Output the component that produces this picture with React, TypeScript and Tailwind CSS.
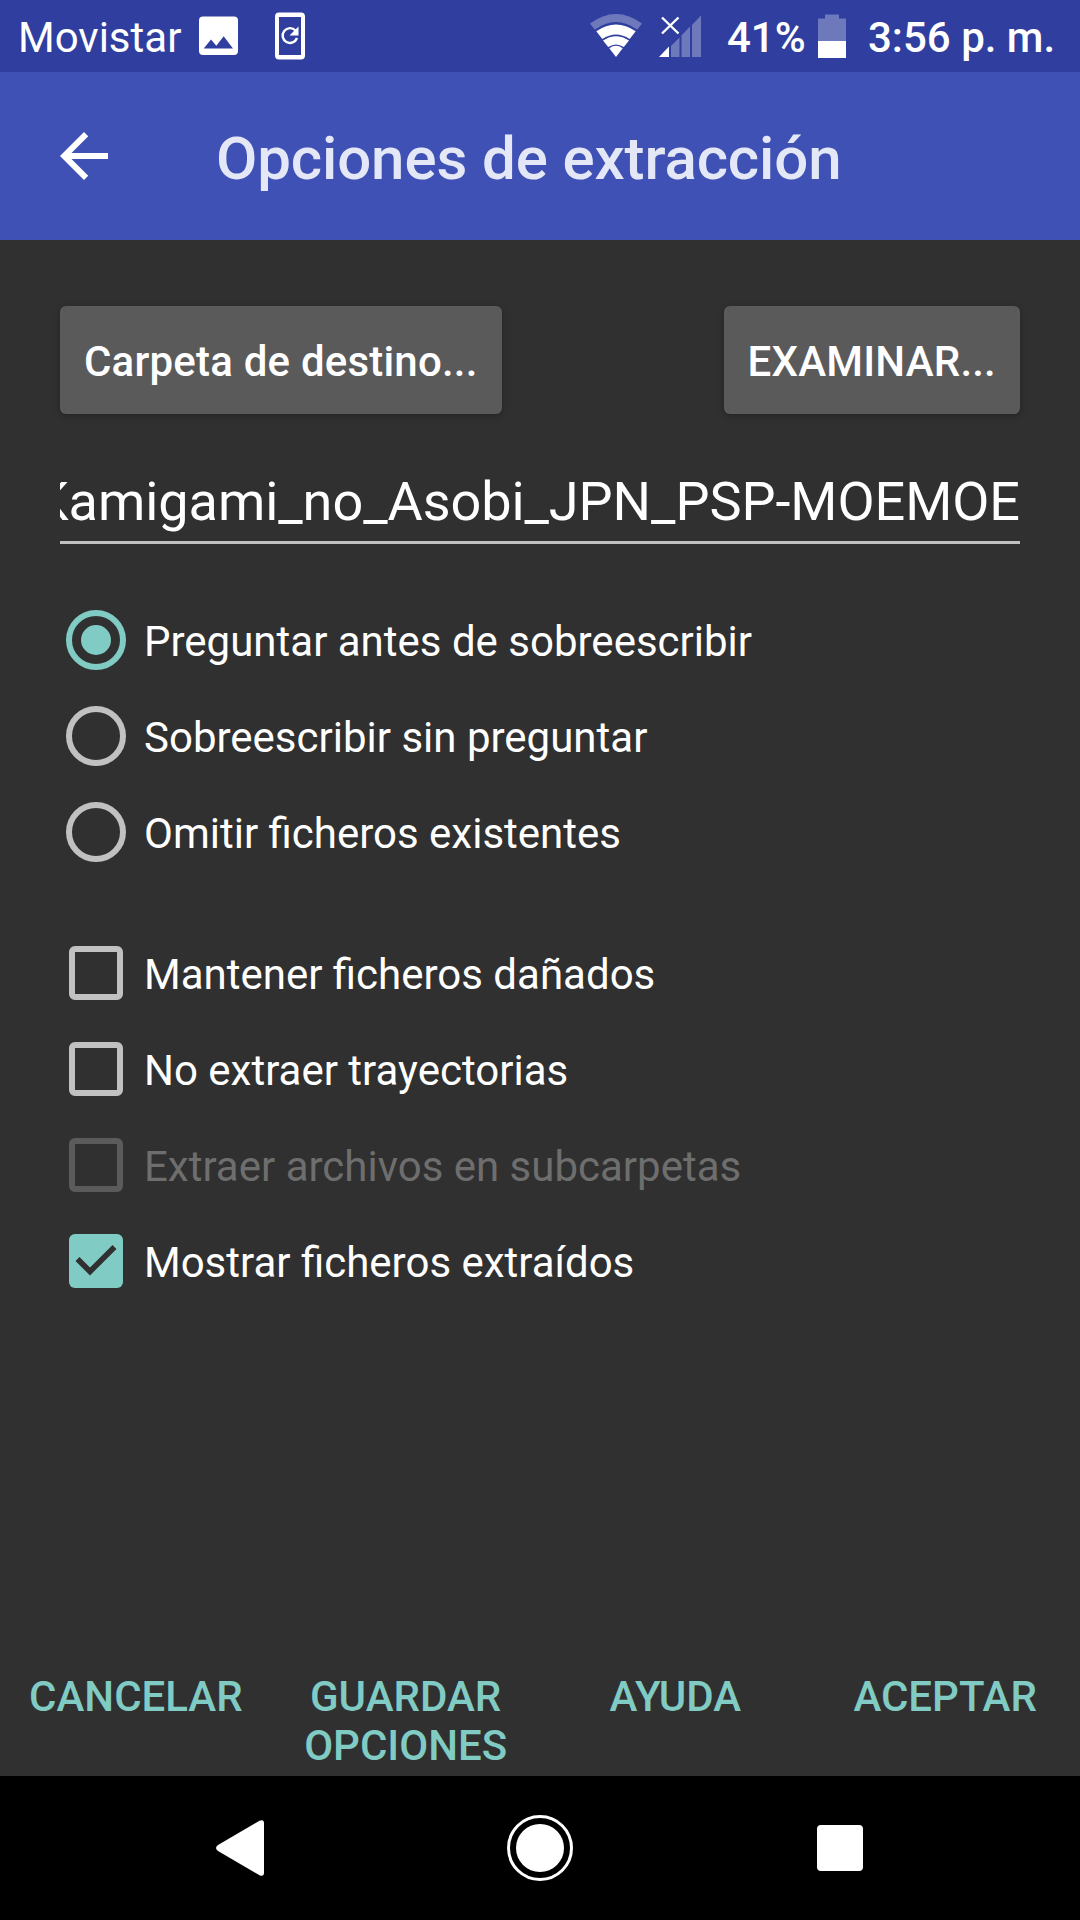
import type { ReactNode } from "react";

function StatusBar() {
  return (
    <div className="flex h-[72px] items-center bg-[#303f9f] text-[42px] leading-[72px] text-white">
      <span className="ml-[18px] w-[164px] shrink-0 whitespace-nowrap pt-[4px]">Movistar</span>
      <svg className="ml-[17px] h-[72px] w-[39px] shrink-0" viewBox="0 0 39 72">
        <path
          fill="#fff"
          fillRule="evenodd"
          d="M4 16.5H35a4 4 0 0 1 4 4V51a4 4 0 0 1-4 4H4a4 4 0 0 1-4-4V20.500a4 4 0 0 1 4-4ZM4.700 48.500H34L24.700 36.200L17.300 45.800L12 39.500Z"
        />
      </svg>
      <svg className="ml-[37px] h-[72px] w-[30px] shrink-0" viewBox="0 0 30 72">
        <rect x="2" y="14.500" width="26" height="43" rx="2" fill="none" stroke="#fff" strokeWidth="4" />
        <path d="M2 13h26v4H2zM2 55h26v4H2z" fill="#fff" />
        <path d="M20.500 30.500A7.400 7.400 0 1 0 22 38" fill="none" stroke="#fff" strokeWidth="2.400" />
        <path d="M23.500 26.500v9h-9z" fill="#fff" />
      </svg>
      <svg className="ml-auto h-[72px] w-[52px] shrink-0" viewBox="0 0 52 72">
        <path d="M0 23.500Q26 4.500 52 23.500L26 57Z" fill="#fff" fillOpacity="0.300" />
        <path d="M5.500 31Q26 16 46.500 31L26 57Z" fill="#303f9f" stroke="#303f9f" strokeWidth="3" />
        <path d="M6.300 31.300Q26 17.800 45.700 31.300L39.700 39Q26 30 12.300 39Z" fill="#fff" />
        <path d="M13 40.500Q26 31.800 39 40.500L33.800 47Q26 42 18.200 47Z" fill="#fff" />
        <path d="M19.300 48.200Q26 43.500 32.700 48.200L26 57Z" fill="#fff" />
      </svg>
      <svg className="ml-[17px] h-[72px] w-[43px] shrink-0" viewBox="0 0 43 72">
        <g fill="#fff" fillOpacity="0.300">
          <path d="M12 46L20.500 37.500V57H12Z" />
          <path d="M22.500 35.500L31 26.500V57H22.500Z" />
          <path d="M33 25L42 15.500V57H33Z" />
        </g>
        <path d="M0 57L10 46.500V57Z" fill="#fff" />
        <path d="M3 17.500L19.500 33.500M19.500 17.500L3 33.500" stroke="#fff" strokeWidth="2.400" />
      </svg>
      <span className="ml-[25px] w-[78px] shrink-0 whitespace-nowrap pt-[4px] font-medium">41%</span>
      <svg className="ml-[13px] h-[72px] w-[28px] shrink-0" viewBox="0 0 28 72">
        <path d="M7 14.500H21V18.500H28V41H0V18.500H7Z" fill="#fff" fillOpacity="0.300" />
        <path d="M0 41H28V58H0Z" fill="#fff" />
      </svg>
      <span className="ml-[22px] w-[212px] shrink-0 whitespace-nowrap pt-[4px] font-medium">3:56 p. m.</span>
    </div>
  );
}

function AppBar() {
  return (
    <header className="flex h-[168px] items-center bg-[#3f51b5] pl-[48px]">
      <svg className="size-[72px]" viewBox="0 0 24 24" fill="#fff">
        <path d="M20 11H7.830l5.590-5.590L12 4l-8 8 8 8 1.410-1.410L7.830 13H20v-2z" />
      </svg>
      <h1 className="ml-[96px] pt-[6px] text-[60px] font-medium leading-[70px] tracking-[-0.120px] text-[#e4e7f5]">
        Opciones de extracción
      </h1>
    </header>
  );
}

function RaisedButton({ children }: { children: ReactNode }) {
  return (
    <button className="h-[108px] rounded-[6px] bg-[#5a5a5b] px-[24px] pt-[3px] text-[42px] font-medium leading-[49px] tracking-[0.200px] text-white shadow-[0_2px_6px_rgba(0,0,0,0.25)]">
      {children}
    </button>
  );
}

function Radio({ label, checked }: { label: string; checked?: boolean }) {
  return (
    <label className="flex h-24 items-center">
      <span
        className={
          checked
            ? "flex size-[60px] items-center justify-center rounded-full border-[6px] border-[#80cbc4]"
            : "size-[60px] rounded-full border-[6px] border-[#c1c1c1]"
        }
      >
        {checked && <span className="size-[30px] rounded-full bg-[#80cbc4]" />}
      </span>
      <span className="ml-[18px] pt-[3px] leading-[49px]">{label}</span>
    </label>
  );
}

function Check({ label, checked, disabled }: { label: string; checked?: boolean; disabled?: boolean }) {
  return (
    <label className="flex h-24 items-center pl-[3px]">
      {checked ? (
        <svg className="size-[54px]" viewBox="0 0 54 54">
          <rect width="54" height="54" rx="6" fill="#80cbc4" />
          <path d="M8.500 25L21 37.500L45.500 13" fill="none" stroke="#303030" strokeWidth="5.600" />
        </svg>
      ) : (
        <svg className="size-[54px]" viewBox="0 0 54 54">
          <path
            fillRule="evenodd"
            fill={disabled ? "#5b5b5b" : "#c1c1c1"}
            d="M6 0H48A6 6 0 0 1 54 6V48A6 6 0 0 1 48 54H6A6 6 0 0 1 0 48V6A6 6 0 0 1 6 0ZM6 6V48H48V6Z"
          />
        </svg>
      )}
      <span className={disabled ? "ml-[21px] pt-[3px] leading-[49px] text-[#6e6e6e]" : "ml-[21px] pt-[3px] leading-[49px]"}>
        {label}
      </span>
    </label>
  );
}

export default function App() {
  return (
    <div className="flex h-[1920px] w-[1080px] flex-col overflow-hidden bg-[#303030] font-['Roboto',sans-serif] text-white">
      <StatusBar />
      <AppBar />
      <main className="flex flex-1 flex-col px-[60px] pt-[66px] text-[42px]">
        <div className="flex justify-between">
          <RaisedButton>Carpeta de destino...</RaisedButton>
          <RaisedButton>EXAMINAR...</RaisedButton>
        </div>
        <div className="mt-[56px] flex h-[74px] justify-end overflow-hidden border-b-[3px] border-[#c1c1c1] text-[54px] leading-[64px] tracking-[-0.050px]">
          <span className="whitespace-nowrap">Kamigami_no_Asobi_JPN_PSP-MOEMOE</span>
        </div>
        <div className="mt-[48px] pl-[6px]">
          <Radio label="Preguntar antes de sobreescribir" checked />
          <Radio label="Sobreescribir sin preguntar" />
          <Radio label="Omitir ficheros existentes" />
        </div>
        <div className="mt-[45px] pl-[6px]">
          <Check label="Mantener ficheros dañados" />
          <Check label="No extraer trayectorias" />
          <Check label="Extraer archivos en subcarpetas" disabled />
          <Check label="Mostrar ficheros extraídos" checked />
        </div>
      </main>
      <div className="grid h-[104px] grid-cols-4 pl-px text-center text-[42px] font-medium leading-[49px] text-[#80cbc4]">
        <button className="self-start">CANCELAR</button>
        <button className="self-start">
          GUARDAR
          <br />
          OPCIONES
        </button>
        <button className="self-start">AYUDA</button>
        <button className="self-start">ACEPTAR</button>
      </div>
      <nav className="flex h-36 items-center justify-between bg-black pl-[216px] pr-[217px]">
        <svg className="h-[56px] w-[48px]" viewBox="0 0 48 56">
          <path d="M2 25L43.500 0.800Q48 -1 48 3.500V52.500Q48 57 43.500 55.200L2 31Q-2 28 2 25Z" fill="#fff" />
        </svg>
        <svg className="mr-px size-[66px]" viewBox="0 0 66 66">
          <circle cx="33" cy="33" r="31.500" fill="none" stroke="#fff" strokeWidth="3" />
          <circle cx="33" cy="33" r="24" fill="#fff" />
        </svg>
        <span className="size-[46px] rounded-[4px] bg-white" />
      </nav>
    </div>
  );
}
